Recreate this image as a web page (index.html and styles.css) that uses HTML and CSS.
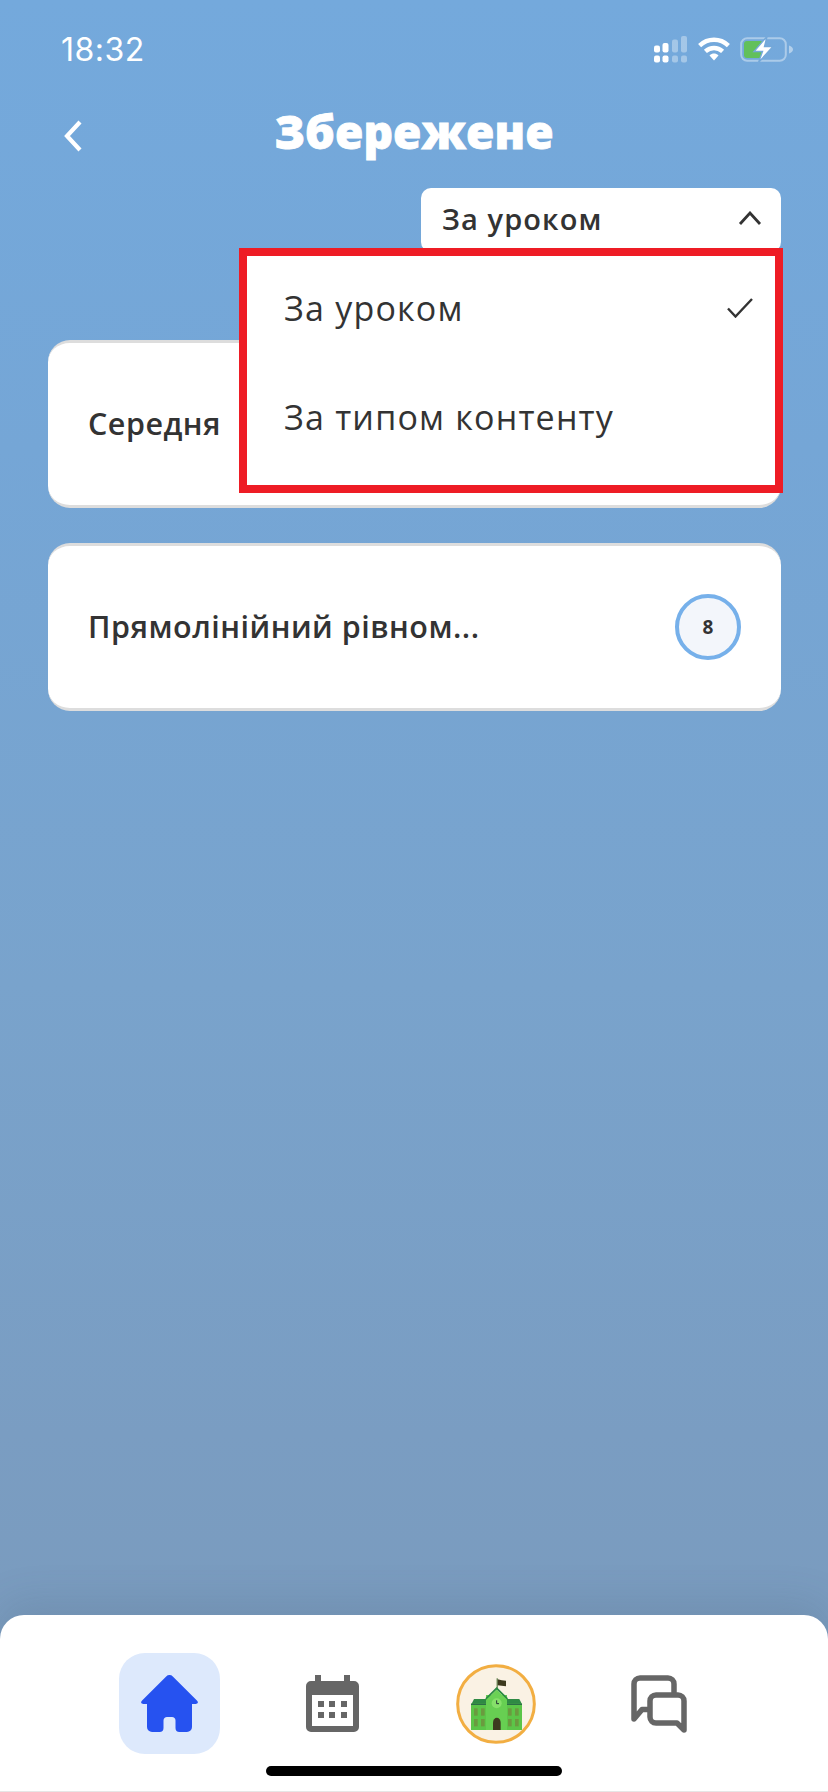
FILE: index.html
```html
<!DOCTYPE html>
<html lang="uk">
<head>
<meta charset="utf-8">
<title>Збережене</title>
<link rel="stylesheet" href="styles.css">
</head>
<body>
<div class="screen">
  <div class="status">
    <span class="time">18:32</span>
    <div class="status-icons">
      <svg class="ic-signal" width="33" height="27" viewBox="0 0 33 27" fill="#fff">
        <rect x="0" y="9.5" width="6" height="7" rx="2"/><rect x="0" y="19.5" width="6" height="7" rx="2"/>
        <rect x="8.5" y="7" width="6" height="9.5" rx="2"/><rect x="8.5" y="19.5" width="6" height="7" rx="2"/>
        <g opacity=".35"><rect x="18" y="3.5" width="6" height="13" rx="2"/><rect x="18" y="19.5" width="6" height="7" rx="2"/>
        <rect x="27" y="0" width="6" height="16.5" rx="2"/><rect x="27" y="19.5" width="6" height="7" rx="2"/></g>
      </svg>
      <svg class="ic-wifi" width="32" height="24" viewBox="0 0 32 24" fill="none" stroke="#fff" stroke-width="4.4">
        <path d="M1.6 8.6C9.8 .8 22.2 .8 30.4 8.6"/>
        <path d="M7.4 14.4C12.4 9.8 19.6 9.8 24.6 14.4"/>
        <path d="M11.5 18.4L16 23.4L20.5 18.4C17.6 16 14.4 16 11.5 18.4Z" fill="#fff" stroke="none"/>
      </svg>
      <svg class="ic-battery" width="54" height="27" viewBox="0 0 54 27">
        <rect x="1.2" y="2.2" width="44.6" height="22.6" rx="6" fill="none" stroke="#fff" stroke-opacity=".4" stroke-width="2"/>
        <rect x="4" y="5" width="19" height="17" rx="3" fill="#62c05c"/>
        <path d="M49 9.5c2.600.8 4 2.300 4 4s-1.400 3.200-4 4Z" fill="#fff" fill-opacity=".45"/>
        <path d="M27 0.500L14 15.500H22.500L18.500 26.500L33 10.500H24.500Z" fill="#fff" stroke="#74a8d9" stroke-width="1.400"/>
      </svg>
    </div>
  </div>

  <header class="topbar">
    <svg class="back" width="18" height="32" viewBox="0 0 18 32" fill="none" stroke="#fff" stroke-width="4.200">
      <path d="M16 2L3 16L16 30"/>
    </svg>
    <h1 class="title">Збережене</h1>
  </header>

  <main class="content">
    <div class="filter">
      <button class="filter-btn" type="button">
        <span>За уроком</span>
        <svg width="24" height="14" viewBox="0 0 24 14" fill="none" stroke="#333" stroke-width="2.800"><path d="M2 13L12 2L22 13"/></svg>
      </button>
      <div class="menu">
        <div class="menu-row">
          <span>За уроком</span>
          <svg width="26" height="20" viewBox="0 0 26 20" fill="none" stroke="#333" stroke-width="2.400"><path d="M1 10.500L8.500 18.500L25 1"/></svg>
        </div>
        <div class="menu-row"><span>За типом контенту</span></div>
      </div>
    </div>

    <div class="cards">
      <article class="card"><span class="card-title">Середня</span></article>
      <article class="card">
        <span class="card-title">Прямолінійний рівном...</span>
        <span class="badge">8</span>
      </article>
    </div>
  </main>

  <nav class="tabbar">
    <div class="tabs">
      <div class="tab">
        <span class="tile">
          <svg width="59" height="59" viewBox="0 0 59 59" fill="#2652f0">
            <path d="M26.200 2.400a4.500 4.500 0 0 1 6.600 0L56.900 26.400c2.100 2.300.5 3.600-1.400 3.600H52V53a5 5 0 0 1-5 5H39.500a4 4 0 0 1-4-4V46.500c0-2-1.500-3.500-3.500-3.500h-5c-2 0-3.500 1.500-3.500 3.500V54a4 4 0 0 1-4 4H12a5 5 0 0 1-5-5V30H3.500c-1.900 0-3.500-1.300-1.400-3.600Z"/>
          </svg>
        </span>
      </div>
      <div class="tab">
        <svg width="53" height="57" viewBox="0 0 53 57">
          <path fill="#666" d="M9 0h6v6h23V0h6v6h4a5 5 0 0 1 5 5v41a5 5 0 0 1-5 5H5a5 5 0 0 1-5-5V11a5 5 0 0 1 5-5h4Z"/>
          <rect x="6" y="20" width="41" height="31" fill="#fff"/>
          <g fill="#666">
            <rect x="12" y="26" width="6" height="6"/><rect x="23" y="26" width="6" height="6"/><rect x="35" y="26" width="6" height="6"/>
            <rect x="12" y="37" width="6" height="6"/><rect x="23" y="37" width="6" height="6"/><rect x="35" y="37" width="6" height="6"/>
          </g>
        </svg>
      </div>
      <div class="tab">
        <svg width="80" height="80" viewBox="30 25 240 240">
          <circle cx="150" cy="145" r="115" fill="#faf2e4" stroke="#f2ae42" stroke-width="9"/>
          <path d="M152 68h3v34h-3Z" fill="#3e6b2c"/>
          <path d="M155 71l12 3 13 1v17l-13-2-12-1Z" fill="#3d3a1f"/>
          <path d="M76 146l8-16h38v16Z" fill="#2f8a44"/>
          <path d="M228 146l-8-16h-38v16Z" fill="#2f8a44"/>
          <rect x="75" y="144" width="153" height="79" fill="#5cc548"/>
          <rect x="75" y="144" width="153" height="4" fill="#2c6f46"/>
          <rect x="120" y="118" width="63" height="105" fill="#67cf52"/>
          <path d="M152 94L186 128L183 132L152 102L121 132L118 128Z" fill="#2c8a45"/>
          <path d="M152 102L183 132H121Z" fill="#6bd155"/>
          <circle cx="152" cy="143" r="15" fill="#86e06a"/>
          <path d="M152 134v10h7" fill="none" stroke="#233" stroke-width="3"/>
          <path d="M141 223v-22a11.500 15 0 0 1 23 0v22Z" fill="#3d3a1f"/>
          <g fill="#6b9a3f">
            <rect x="84" y="158" width="11" height="22"/><rect x="105" y="158" width="11" height="22"/>
            <rect x="84" y="190" width="11" height="22"/><rect x="105" y="190" width="11" height="22"/>
            <rect x="186" y="158" width="11" height="22"/><rect x="207" y="158" width="11" height="22"/>
            <rect x="186" y="190" width="11" height="22"/><rect x="207" y="190" width="11" height="22"/>
          </g>
        </svg>
      </div>
      <div class="tab">
        <svg width="56" height="58" viewBox="0 0 56 58" fill="none" stroke="#666" stroke-width="5.500" stroke-linejoin="round" stroke-linecap="round">
          <path d="M43 17V9a6 6 0 0 0-6-6H9a6 6 0 0 0-6 6V44L11 34.500H17"/>
          <path d="M25 20H47a6 6 0 0 1 6 6V55L46 48H25a6 6 0 0 1-6-6V26a6 6 0 0 1 6-6Z"/>
        </svg>
      </div>
    </div>
    <div class="home-indicator"></div>
  </nav>
</div>
</body>
</html>
```
FILE: styles.css
```css
* { box-sizing: border-box; }
html, body { margin: 0; padding: 0; }
body {
  width: 828px;
  height: 1792px;
  overflow: hidden;
  font-family: "Open Sans", "Noto Sans", sans-serif;
  color: #333;
}
.screen {
  width: 828px;
  height: 1792px;
  display: flex;
  flex-direction: column;
  background: linear-gradient(180deg, #74a9dc 0%, #75a6d6 25%, #79a3cc 55%, #7a9dc2 80%, #7a9abb 100%);
}
.status {
  height: 100px;
  padding: 31px 34px 0 61px;
  display: flex;
  justify-content: space-between;
  align-items: flex-start;
}
.time {
  font-family: "Inter", sans-serif;
  font-size: 32px;
  line-height: 38px;
  letter-spacing: .5px;
  color: #fff;
}
.status-icons {
  display: flex;
  align-items: flex-start;
  padding-top: 5px;
}
.ic-wifi { margin: 1px 0 0 11px; }
.ic-battery { margin-left: 10px; }
.topbar {
  height: 88px;
  position: relative;
  display: flex;
  justify-content: center;
  align-items: center;
}
.back {
  position: absolute;
  left: 64px;
  top: 20px;
}
.title {
  margin: 0;
  font-size: 46px;
  line-height: 60px;
  font-weight: 800;
  color: #fff;
  -webkit-text-stroke: .8px #fff;
  position: relative;
  top: -13px;
}
.content {
  flex: 1;
  min-height: 0;
}
.filter {
  position: relative;
  width: 360px;
  margin-left: 421px;
}
.filter-btn {
  width: 360px;
  height: 64px;
  border: 0;
  border-radius: 10px;
  background: #fff;
  padding: 0 19px 4px 21px;
  display: flex;
  justify-content: space-between;
  align-items: center;
  font-family: inherit;
  font-size: 29px;
  font-weight: 600;
  letter-spacing: 1.1px;
  color: #333;
}
.menu {
  position: absolute;
  left: -182px;
  top: 60px;
  width: 544px;
  height: 245px;
  border: 8px solid #ee1c25;
  background: #fff;
  padding: 2px 22px 17px 37px;
  display: flex;
  flex-direction: column;
  gap: 9px;
  z-index: 2;
}
.menu-row {
  height: 100px;
  display: flex;
  justify-content: space-between;
  align-items: center;
  font-size: 34px;
  letter-spacing: 1.2px;
  color: #333;
}
.cards {
  display: flex;
  flex-direction: column;
  gap: 35px;
  margin: 88px 47px 0 48px;
}
.card {
  height: 168px;
  background: #fff;
  border: solid #ddd;
  border-width: 3px 0;
  border-radius: 22px;
  display: flex;
  justify-content: space-between;
  align-items: center;
  padding: 0 40px 3px 40px;
}
.card-title {
  font-size: 30.5px;
  font-weight: 600;
  letter-spacing: .5px;
  color: #333;
}
.badge {
  width: 66px;
  height: 66px;
  margin-bottom: -3px;
  border-radius: 50%;
  border: 4px solid #76b0ea;
  background: #f3f6fb;
  display: flex;
  align-items: center;
  justify-content: center;
  font-size: 19px;
  font-weight: 700;
}
.tabbar {
  height: 177px;
  background: #fff;
  border-radius: 24px 24px 0 0;
  border-bottom: 1px solid #e6e6e6;
  padding-top: 38px;
  box-shadow: 0 -12px 40px rgba(60, 80, 100, .16);
}
.tabs {
  width: 652px;
  margin: 0 auto;
  display: grid;
  grid-template-columns: repeat(4, 163px);
  height: 101px;
}
.tab {
  display: flex;
  align-items: center;
  justify-content: center;
}
.tile {
  width: 101px;
  height: 101px;
  border-radius: 26px;
  background: #dde9fc;
  display: flex;
  align-items: center;
  justify-content: center;
}
.home-indicator {
  width: 296px;
  height: 10px;
  margin: 12px auto 0;
  background: #000;
  border-radius: 5px;
}
```
